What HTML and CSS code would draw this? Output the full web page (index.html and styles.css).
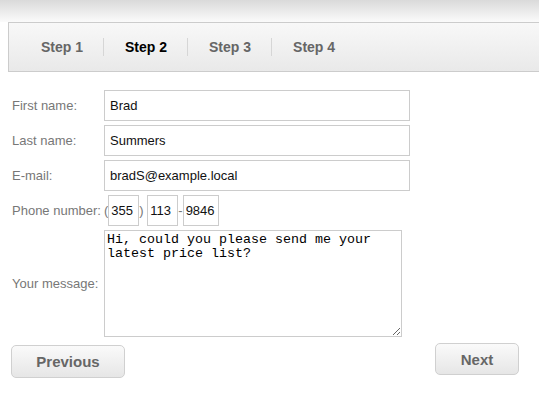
FILE: index.html
```html
<!DOCTYPE html>
<html>
<head>
<meta charset="utf-8">
<link rel="stylesheet" href="styles.css">
</head>
<body>
<div class="topband"></div>
<nav class="steps">
  <ul class="step-list">
    <li class="step">Step 1</li>
    <li class="step active">Step 2</li>
    <li class="step">Step 3</li>
    <li class="step">Step 4</li>
  </ul>
</nav>
<form class="form">
  <label class="label">First name:</label>
  <input class="field" type="text" value="Brad">
  <label class="label">Last name:</label>
  <input class="field" type="text" value="Summers">
  <label class="label">E-mail:</label>
  <input class="field" type="text" value="bradS@example.local">
  <label class="label">Phone number:</label>
  <div class="phone">(<input class="ph ph3" type="text" value="355">) <input class="ph ph3" type="text" value="113">-<input class="ph ph4" type="text" value="9846"></div>
  <label class="label">Your message:</label>
  <textarea class="message">Hi, could you please send me your latest price list?</textarea>
</form>
<div class="actions">
  <button class="btn btn-prev" type="button">Previous</button>
  <button class="btn btn-next" type="button">Next</button>
</div>
</body>
</html>
```
FILE: styles.css
```css
html, body {
  margin: 0;
  padding: 0;
  background: #fff;
  font-family: "Liberation Sans", Arial, sans-serif;
}
.topband {
  height: 22px;
  background: linear-gradient(#dadada, #fbfbfb);
}
.steps {
  margin-left: 8px;
  height: 48px;
  border: 1px solid #cccccc;
  border-right: none;
  background: linear-gradient(#f8f8f8, #e9e9e9);
  display: flex;
  align-items: center;
}
.step-list {
  list-style: none;
  margin: 0;
  padding: 0 0 0 10px;
  display: flex;
  align-items: center;
}
.step {
  font-size: 14px;
  font-weight: bold;
  color: #666;
  padding: 0 20px 0 21px;
  line-height: 18px;
  border-left: 1px solid #d6d6d6;
}
.step:first-child {
  border-left-color: transparent;
}
.step.active {
  color: #000;
}
.form {
  display: grid;
  grid-template-columns: 92px 306px;
  row-gap: 4px;
  align-items: center;
  padding: 18px 0 0 12px;
  margin: 0;
}
.label {
  font-size: 13px;
  color: #777;
  white-space: nowrap;
}
.field {
  box-sizing: border-box;
  height: 31px;
  width: 306px;
  margin: 0;
  border: 1px solid #cccccc;
  padding: 0 5px;
  font-family: "Liberation Sans", Arial, sans-serif;
  font-size: 13px;
  color: #111;
  outline: none;
}
.phone {
  font-size: 13px;
  color: #777;
  display: flex;
  align-items: center;
  white-space: pre;
}
.ph {
  box-sizing: border-box;
  height: 31px;
  margin: 0;
  border: 1px solid #cccccc;
  padding: 0 2px;
  font-family: "Liberation Sans", Arial, sans-serif;
  font-size: 13px;
  color: #111;
  outline: none;
}
.ph3 { width: 31px; }
.ph4 { width: 36px; }
.message {
  box-sizing: border-box;
  width: 298px;
  height: 107px;
  margin: 0;
  border: 1px solid #cccccc;
  padding: 2px;
  font-family: "Liberation Mono", "Courier New", monospace;
  font-size: 13.333px;
  line-height: 14px;
  color: #000;
  outline: none;
}
.actions {
  display: flex;
  justify-content: space-between;
  align-items: flex-start;
  padding: 6px 20px 0 11px;
}
.btn {
  box-sizing: border-box;
  height: 32px;
  border: 1px solid #d0d0d0;
  border-radius: 5px;
  background: linear-gradient(#fafafa, #e6e6e6);
  font-family: "Liberation Sans", Arial, sans-serif;
  font-size: 15px;
  font-weight: bold;
  color: #666;
  padding: 0;
}
.btn-prev {
  width: 114px;
  height: 33px;
  margin-top: 2px;
}
.btn-next {
  width: 84px;
}
```
